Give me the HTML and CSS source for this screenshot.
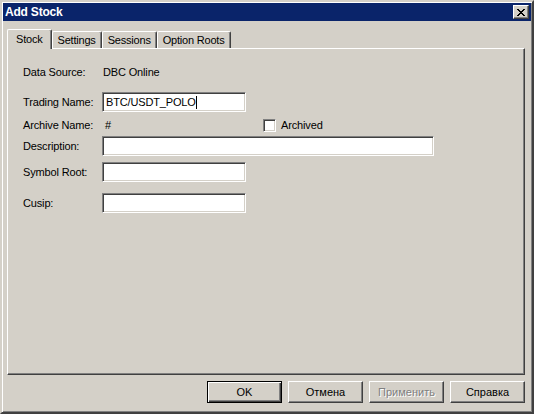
FILE: index.html
```html
<!DOCTYPE html>
<html>
<head>
<meta charset="utf-8">
<link rel="stylesheet" href="styles.css">
</head>
<body>
<div class="window">
  <div class="titlebar">
    <span class="title">Add Stock</span>
    <div class="close"><svg width="8" height="7" viewBox="0 0 8 7"><path d="M0 0h2v1h1v1h2v-1h1v-1h2v1h-1v1h-1v1h-1v1h1v1h1v1h1v1h-2v-1h-1v-1h-2v1h-1v1h-2v-1h1v-1h1v-1h1v-1h-1v-1h-1v-1h-1z" fill="#000"/></svg></div>
  </div>
  <div class="tabs">
    <div class="tab selected">Stock</div>
    <div class="tab">Settings</div>
    <div class="tab">Sessions</div>
    <div class="tab">Option Roots</div>
  </div>
  <div class="panel">
    <div class="row r1"><span class="label">Data Source:</span><span class="value">DBC Online</span></div>
    <div class="row r2"><span class="label">Trading Name:</span><div class="input short"><span class="itext">BTC/USDT_POLO</span><span class="caret"></span></div></div>
    <div class="row r3"><span class="label">Archive Name:</span><span class="value hash">#</span><span class="check"><span class="box"></span><span class="clabel">Archived</span></span></div>
    <div class="row r4"><span class="label">Description:</span><div class="input long"></div></div>
    <div class="row r5"><span class="label">Symbol Root:</span><div class="input short"></div></div>
    <div class="row r6"><span class="label">Cusip:</span><div class="input short"></div></div>
  </div>
  <div class="buttons">
    <div class="btn default"><span class="btn-in">OK</span></div>
    <div class="btn"><span class="btn-in">Отмена</span></div>
    <div class="btn disabled"><span class="btn-in">Применить</span></div>
    <div class="btn"><span class="btn-in">Справка</span></div>
  </div>
</div>
</body>
</html>
```
FILE: styles.css
```css
* { box-sizing: border-box; }
html, body { margin: 0; padding: 0; background: #d4d0c8; }
body { font-family: "Liberation Sans", Arial, sans-serif; font-size: 11px; color: #000; }

.window {
  width: 534px; height: 414px;
  background: #d4d0c8;
  border: 2px solid; border-color: #d4d0c8 #404040 #404040 #d4d0c8;
  box-shadow: inset 1px 1px #fff, inset -1px -1px #808080;
  padding: 1px;
  display: flex; flex-direction: column;
}
.titlebar {
  height: 18px; background: #0a246a; color: #fff;
  display: flex; align-items: center; justify-content: space-between;
  padding: 0 2px 0 2px;
}
.title { font-weight: bold; font-size: 12px; letter-spacing: -0.2px; }
.close {
  width: 16px; height: 14px; background: #d4d0c8;
  border: 1px solid; border-color: #fff #404040 #404040 #fff;
  box-shadow: inset -1px -1px #808080;
  display: flex; align-items: center; justify-content: center;
}
.close svg { display: block; margin-left: -1px; }

.tabs {
  display: flex; align-items: flex-end;
  height: 19px; margin: 8px 0 0 4px;
}
.tab {
  height: 17px; line-height: 16px;
  padding: 0 5px 0 5px;
  border-top: 1px solid #fff; border-left: 1px solid #fff;
  border-right: 1px solid #404040;
  box-shadow: inset -1px 0 #808080;
  border-radius: 2px 2px 0 0;
  background: #d4d0c8;
  white-space: nowrap;
  letter-spacing: -0.2px;
}
.tab.selected {
  height: 20px; line-height: 18px;
  margin-bottom: -1px;
  padding: 0 8px 0 8px;
  position: relative; z-index: 1;
}

.panel {
  height: 327px; margin: 0 6px 0 4px;
  border-top: 1px solid #fff; border-left: 1px solid #fff;
  border-right: 1px solid #404040; border-bottom: 1px solid #404040;
  box-shadow: inset -1px -1px #808080;
  padding: 13px 0 0 15px;
  display: flex; flex-direction: column;
}
.row { display: flex; align-items: center; height: 20px; letter-spacing: -0.15px; }
.r2 { margin-top: 10px; }
.r3 { margin-top: 3px; }
.r4 { margin-top: 1px; }
.r5 { margin-top: 6px; }
.r6 { margin-top: 11px; }
.label { width: 79px; flex: none; }
.value { padding-left: 1px; }
.hash { width: 161px; padding-left: 3px; flex: none; }

.input {
  height: 20px; background: #fff;
  border: 1px solid; border-color: #808080 #fff #fff #808080;
  box-shadow: inset 1px 1px #404040, inset -1px -1px #d4d0c8;
  display: flex; align-items: center; padding-left: 3px;
}
.input.short { width: 144px; }
.input.long { width: 332px; }
.caret { width: 1px; height: 13px; background: #000; }

.check { display: flex; align-items: center; }
.box {
  width: 13px; height: 13px; background: #fff;
  border: 1px solid; border-color: #808080 #fff #fff #808080;
  box-shadow: inset 1px 1px #404040, inset -1px -1px #d4d0c8;
}
.clabel { margin-left: 5px; }

.buttons {
  display: flex; justify-content: flex-end; gap: 6px;
  margin: 6px 6px 0 0;
}
.btn {
  width: 75px; height: 22px;
  border: 1px solid; border-color: #fff #404040 #404040 #fff;
  box-shadow: inset -1px -1px #808080;
  display: flex; align-items: center; justify-content: center;
}
.btn.default {
  border: 1px solid #000;
  box-shadow: inset 1px 1px #fff, inset -1px -1px #404040, inset -2px -2px #808080;
}
.btn.disabled .btn-in { color: #808080; text-shadow: 1px 1px #fff; }
```
